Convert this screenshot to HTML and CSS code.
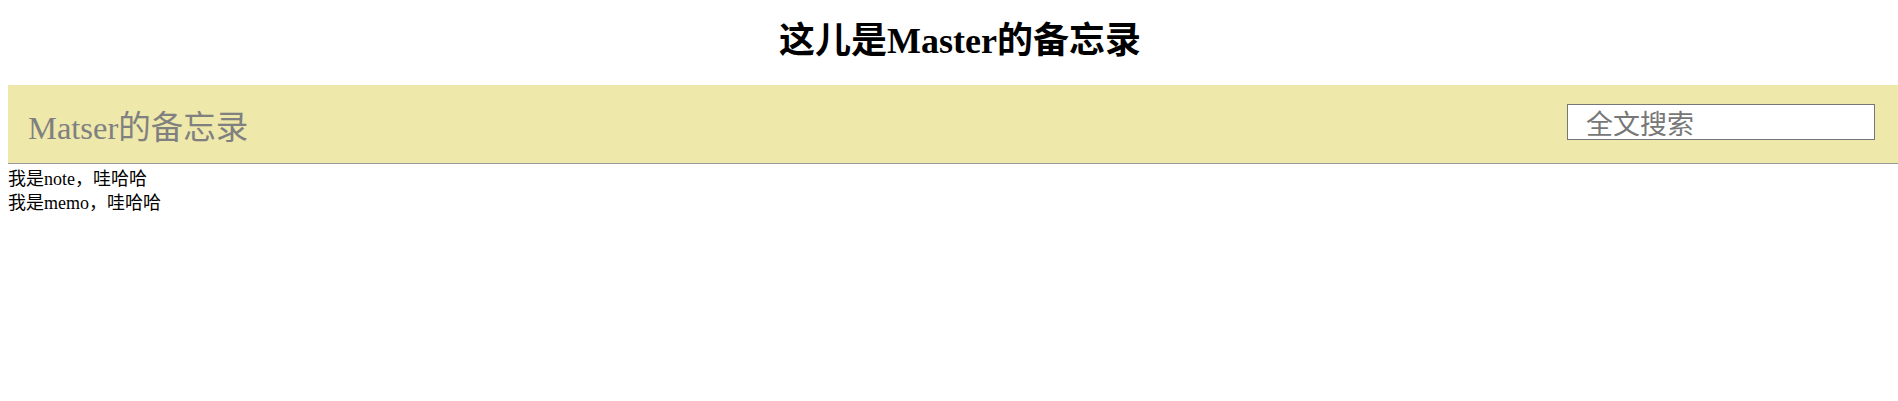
FILE: index.html
```html
<!DOCTYPE html>
<html lang="zh">
<head>
<meta charset="utf-8">
<title>Master的备忘录</title>
<link rel="stylesheet" href="styles.css">
</head>
<body>
<h1 class="page-title">这儿是Master的备忘录</h1>
<div class="bar">
  <div class="bar-title">Matser的备忘录</div>
  <input class="search" type="text" placeholder="全文搜索">
</div>
<div class="notes">
  <div class="note">我是note，哇哈哈</div>
  <div class="note">我是memo，哇哈哈</div>
</div>
</body>
</html>
```
FILE: styles.css
```css
html, body {
  background: #fff;
}
body {
  margin: 0 0 0 8px;
  font-family: "Liberation Serif", "Noto Sans CJK SC", serif;
  color: #000;
}
.page-title {
  margin: 0 0 8px 0;
  padding: 6px 0 0 14px;
  font-size: 36px;
  font-weight: bold;
  line-height: 71px;
  text-align: center;
  font-family: "Liberation Serif", "Noto Sans CJK SC", serif;
}
.bar {
  display: flex;
  align-items: center;
  justify-content: space-between;
  height: 78px;
  padding: 0 23px 0 20px;
  background: #eee8aa;
  border-bottom: 1px solid #999;
}
.bar-title {
  font-size: 32.5px;
  color: #808080;
  font-family: "Liberation Serif", "Noto Sans CJK SC", serif;
}
.search {
  box-sizing: border-box;
  width: 308px;
  height: 36px;
  padding: 0 0 0 18px;
  margin: 0 0 4px 0;
  border: 1px solid #767676;
  background: #fff;
  font-size: 27px;
  font-family: "Noto Sans CJK SC", sans-serif;
  color: #333;
  outline: none;
}
.search::placeholder {
  color: #777;
}
.notes {
  padding-top: 3px;
  font-size: 18px;
  line-height: 24px;
}
```
